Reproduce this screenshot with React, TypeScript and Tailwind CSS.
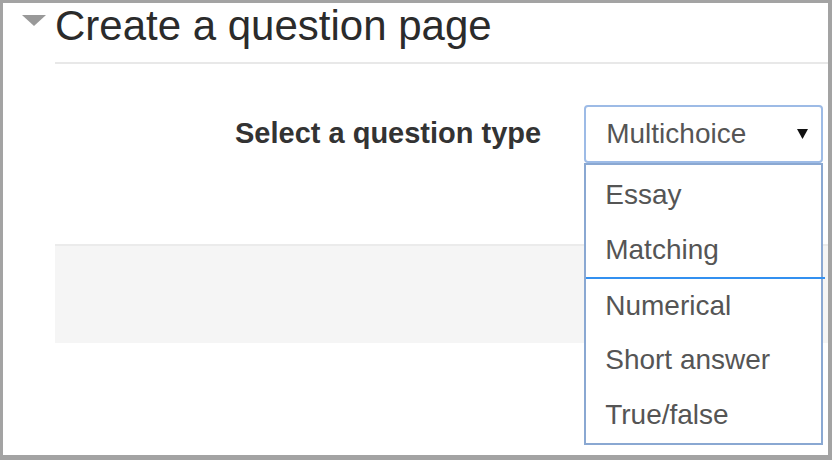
import React from 'react'

const options = ['Essay', 'Matching', 'Numerical', 'Short answer', 'True/false']

export default function App() {
  return (
    <div className="w-[832px] h-[460px] bg-[#a3a3a3] pt-[3px] pl-[3px] pr-[4px] pb-[5px] font-['Liberation_Sans',Arial,sans-serif]">
      <div className="h-full bg-white relative">
        {/* header */}
        <div className="flex items-start h-[59px]">
          <svg width="24" height="12" viewBox="0 0 24 12" className="ml-[19px] mt-[12px] shrink-0">
            <polygon points="0,0 24,0 12,11" fill="#999999" />
          </svg>
          <h2 className="ml-[9px] text-[42px] leading-[46px] text-[#2b2b2b] whitespace-nowrap">
            Create a question page
          </h2>
        </div>
        <div className="ml-[52px] h-[2px] bg-[#e8e8e8]" />

        {/* form row */}
        <div className="flex items-center mt-[41px] pl-[232px]">
          <label className="text-[29px] font-bold text-[#333333] whitespace-nowrap">
            Select a question type
          </label>
          <div className="relative ml-[43px]">
            <div className="w-[239px] h-[58px] border-2 border-[#9dbbe6] rounded-[4px] flex items-center justify-between pl-[20px] pr-[13px]">
              <span className="text-[28px] text-[#555555]">Multichoice</span>
              <svg width="11" height="10" viewBox="0 0 11 10">
                <polygon points="0,0 11,0 5.5,10" fill="#111111" />
              </svg>
            </div>
            {/* dropdown */}
            <div className="absolute left-0 top-[58px] w-[239px] bg-white border-2 border-[#8aa8d2] pt-[2px] pb-[1px] z-10">
              {options.map((o, i) => (
                <div
                  key={o}
                  className={`h-[55px] flex items-center pl-[19px] text-[28px] text-[#555555] ${i === 2 ? 'border-t-2 border-[#3390f0] -mr-[4px]' : ''}`}
                >
                  {o}
                </div>
              ))}
            </div>
          </div>
        </div>

        {/* grey panel */}
        <div className="ml-[52px] mt-[81px] h-[99px] bg-[#f5f5f5] border-t-2 border-[#ebebeb]" />
      </div>
    </div>
  )
}
